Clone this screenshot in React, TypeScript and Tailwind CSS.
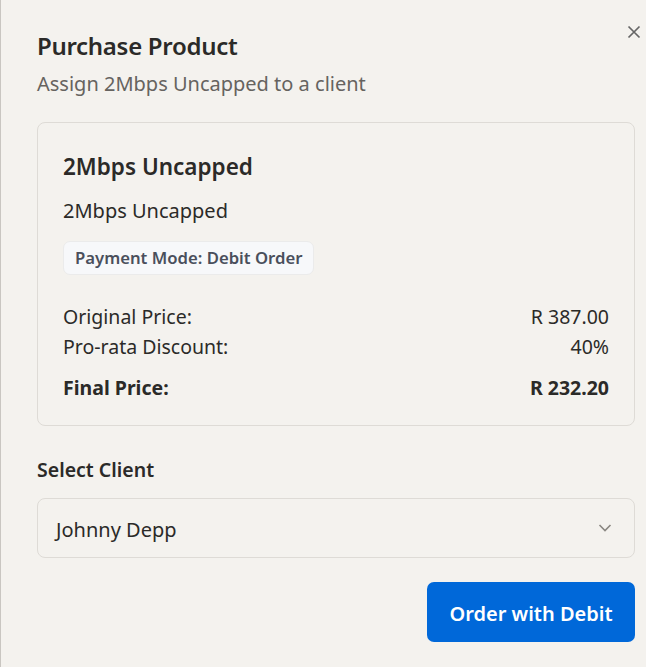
import React from "react";

export default function App() {
  return (
    <div
      className="w-[646px] h-[667px] bg-[#f4f2ee] border-l border-[#c9c6c1] relative text-[#2b2a28]"
      style={{ fontFamily: '"Noto Sans", "Open Sans", sans-serif' }}
    >
      <button className="absolute right-[3px] top-[23px] w-[18px] h-[18px] flex items-center justify-center text-[#666]">
        <svg width="16" height="16" viewBox="0 0 16 16" fill="none" stroke="currentColor" strokeWidth="1.7">
          <path d="M2.5 2.5 L13.5 13.5 M13.5 2.5 L2.5 13.5" />
        </svg>
      </button>
      <div className="pl-[36px] pr-[11px] pt-[28px]">
        <h1 className="text-[24px] leading-[36px] font-semibold tracking-[-0.3px] text-[#2b2a28]">Purchase Product</h1>
        <p className="text-[20px] leading-[28px] text-[#66635f] mt-[6px]">Assign 2Mbps Uncapped to a client</p>

        <div className="mt-[24px] border border-[#dedbd6] rounded-[8px] px-[25px] pt-[29px] pb-[22px]">
          <div className="text-[22.5px] leading-[30px] font-semibold text-[#2b2a28]">2Mbps Uncapped</div>
          <div className="text-[20px] leading-[28px] mt-[15px] text-[#2b2a28]">2Mbps Uncapped</div>
          <div className="mt-[16px] inline-flex items-center h-[34px] px-[11px] rounded-[7px] bg-[#f7f8fa] border border-[#ebebeb] text-[16.7px] font-semibold text-[#4a4f5c]">
            Payment Mode: Debit Order
          </div>
          <div className="mt-[27px] flex flex-col text-[19.5px] leading-[30px]">
            <div className="flex justify-between">
              <span>Original Price:</span>
              <span>R 387.00</span>
            </div>
            <div className="flex justify-between">
              <span>Pro-rata Discount:</span>
              <span>40%</span>
            </div>
            <div className="flex justify-between font-bold mt-[11px]">
              <span>Final Price:</span>
              <span>R 232.20</span>
            </div>
          </div>
        </div>

        <div className="mt-[30px] text-[19.5px] leading-[28px] font-semibold">Select Client</div>
        <div className="mt-[14px] h-[60px] border border-[#dedbd6] rounded-[8px] flex items-center justify-between pl-[18px] pr-[22px] pt-[4px]">
          <span className="text-[20px]">Johnny Depp</span>
          <svg width="14" height="10" viewBox="0 0 14 10" fill="none" stroke="#8a8782" strokeWidth="1.6" className="-mt-[4px]">
            <path d="M1.5 2 L7 7.5 L12.5 2" />
          </svg>
        </div>
        <div className="flex justify-end mt-[24px]">
          <button className="w-[208px] h-[60px] rounded-[7px] bg-[#0068d9] text-white text-[20px] font-semibold pt-[3px]">
            Order with Debit
          </button>
        </div>
      </div>
    </div>
  );
}
